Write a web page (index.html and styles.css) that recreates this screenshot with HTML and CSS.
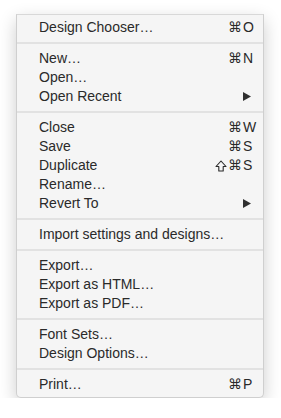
FILE: index.html
```html
<!DOCTYPE html>
<html>
<head>
  <title>File Menu</title>
  <link rel="stylesheet" href="styles.css">
</head>
<body>
  <div class="menu">
    <div class="item"><span class="label">Design Chooser…</span><span class="mods">⌘</span><span class="key">O</span></div>
    <div class="sep"></div>
    <div class="item"><span class="label">New…</span><span class="mods">⌘</span><span class="key">N</span></div>
    <div class="item"><span class="label">Open…</span></div>
    <div class="item"><span class="label">Open Recent</span><span class="mods"></span><span class="key"><svg class="arrow" width="8" height="9" viewBox="0 0 8 9"><polygon points="0,0 8,4.5 0,9"/></svg></span></div>
    <div class="sep"></div>
    <div class="item"><span class="label">Close</span><span class="mods">⌘</span><span class="key">W</span></div>
    <div class="item"><span class="label">Save</span><span class="mods">⌘</span><span class="key">S</span></div>
    <div class="item"><span class="label">Duplicate</span><span class="mods"><svg class="shift" width="12" height="12" viewBox="0 0 12 12"><path d="M6 1 L11 6.5 H8.2 V11 H3.8 V6.5 H1 Z"/></svg>⌘</span><span class="key">S</span></div>
    <div class="item"><span class="label">Rename…</span></div>
    <div class="item"><span class="label">Revert To</span><span class="mods"></span><span class="key"><svg class="arrow" width="8" height="9" viewBox="0 0 8 9"><polygon points="0,0 8,4.5 0,9"/></svg></span></div>
    <div class="sep"></div>
    <div class="item"><span class="label">Import settings and designs…</span></div>
    <div class="sep"></div>
    <div class="item"><span class="label">Export…</span></div>
    <div class="item"><span class="label">Export as HTML…</span></div>
    <div class="item"><span class="label">Export as PDF…</span></div>
    <div class="sep"></div>
    <div class="item"><span class="label">Font Sets…</span></div>
    <div class="item"><span class="label">Design Options…</span></div>
    <div class="sep"></div>
    <div class="item"><span class="label">Print…</span><span class="mods">⌘</span><span class="key">P</span></div>
  </div>
</body>
</html>
```

FILE: styles.css
```css
body {
  margin: 0;
  padding: 14px 0 0 16px;
  background: #fff;
  font-family: "Liberation Sans", Arial, "DejaVu Sans", sans-serif;
  font-size: 14px;
  color: #2a2a2a;
}
.menu {
  width: 246px;
  padding: 3px 0;
  background: #f5f5f5;
  border: 1px solid #cfcfcf;
  border-top-color: #d8d8d8;
  border-radius: 0 0 5px 5px;
  box-shadow: 0 6px 18px rgba(0, 0, 0, 0.2);
}
.item {
  display: grid;
  grid-template-columns: 1fr auto 16px;
  column-gap: 1px;
  align-items: center;
  height: 19px;
  padding: 0 4px 0 22px;
  line-height: 19px;
}
.mods {
  display: flex;
  justify-content: flex-end;
  align-items: center;
  gap: 1px;
  font-family: "DejaVu Sans", sans-serif;
  font-size: 14px;
}
.shift {
  fill: none;
  stroke: #2a2a2a;
  stroke-width: 1.1;
  stroke-linejoin: round;
}
.key {
  display: flex;
  align-items: center;
}
.arrow {
  fill: #2f2f2f;
}
.sep {
  height: 2px;
  margin: 5px 0;
  background: #e2e2e2;
}
```
